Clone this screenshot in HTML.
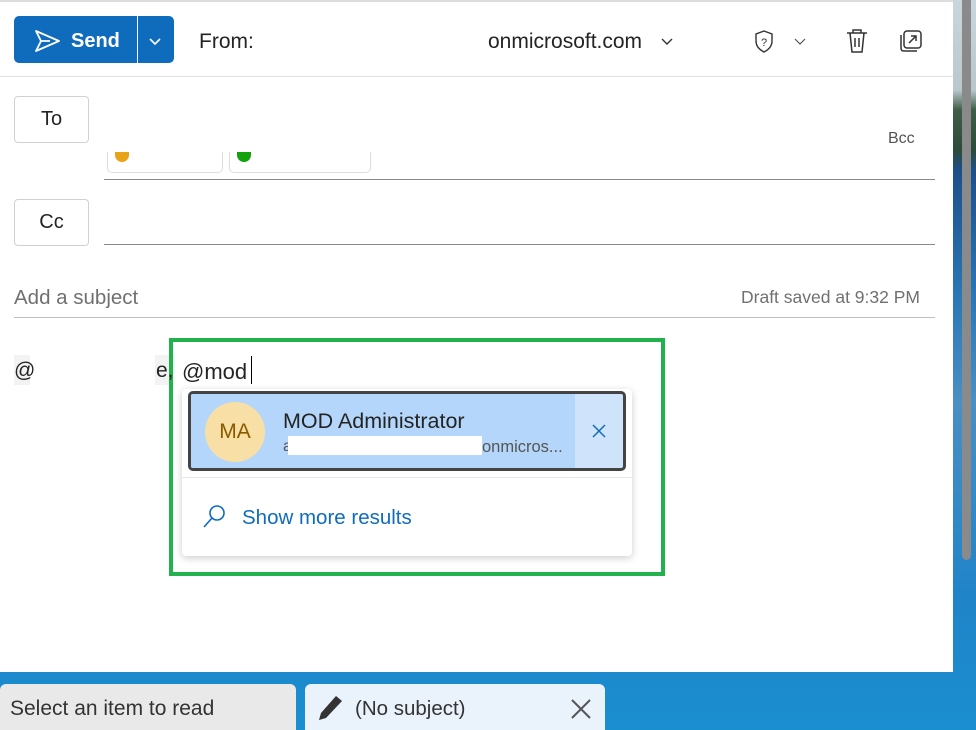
<!DOCTYPE html>
<html><head><meta charset="utf-8"><style>
*{box-sizing:border-box;margin:0;padding:0}
body{width:976px;height:730px;overflow:hidden;position:relative;font-family:"Liberation Sans",sans-serif;
background:linear-gradient(180deg,#c9d6dc 0,#b9c8cc 90px,#3e5e48 110px,#2c4b3a 150px,#1d4f8a 170px,#2a78b8 300px,#4a8ec4 400px,#1f84c8 600px,#1a8fd0 730px)}
.panel{position:absolute;left:0;top:0;width:953px;height:672px;background:#fff;border-top:2px solid #ddd}
.abs{position:absolute}
.scroll{position:absolute;left:962px;top:0;width:9px;height:560px;background:#8a8a8a;border-radius:0 0 5px 5px}
.btn{position:absolute;border:1px solid #d1d1d1;border-radius:4px;background:#fff;font-size:19px;color:#242424;display:flex;align-items:center;justify-content:center}
.line{position:absolute;height:1px;background:#8a8a8a}
</style></head><body>
<div class="panel">
 <div class="abs" style="left:14px;top:14px;width:160px;height:47px;background:#0f6cbd;border-radius:5px"></div>
 <div class="abs" style="left:137px;top:14px;width:1px;height:47px;background:#fff"></div>
 <svg class="abs" style="left:34px;top:27px" width="28" height="24" viewBox="0 0 28 24"><path d="M2 2 L25 12 L2 22 L7 12 Z M7 12 H16" fill="none" stroke="#fff" stroke-width="1.8" stroke-linejoin="round"/></svg>
 <div class="abs" style="left:71px;top:28px;color:#fff;font-size:20px;font-weight:700">Send</div>
 <svg class="abs" style="left:148px;top:35px" width="14" height="10" viewBox="0 0 14 10"><path d="M2 2 L7 7 L12 2" fill="none" stroke="#fff" stroke-width="1.6"/></svg>
 <div class="abs" style="left:199px;top:28px;font-size:21px;color:#242424">From:</div>
 <div class="abs" style="left:488px;top:28px;font-size:21px;color:#242424">onmicrosoft.com</div>
 <svg class="abs" style="left:660px;top:35px" width="14" height="10"><path d="M2 2 L7 7 L12 2" fill="none" stroke="#333" stroke-width="1.4"/></svg>
 <svg class="abs" style="left:752px;top:27px" width="24" height="26" viewBox="0 0 24 26"><path d="M12 2 L20 5 V12 C20 18 16 21 12 23 C8 21 4 18 4 12 V5 Z" fill="none" stroke="#333" stroke-width="1.4"/><text x="12" y="17" font-size="11" text-anchor="middle" font-family="Liberation Sans" fill="#333">?</text></svg>
 <svg class="abs" style="left:794px;top:36px" width="12" height="8"><path d="M1 1 L6 6 L11 1" fill="none" stroke="#555" stroke-width="1.2"/></svg>
 <svg class="abs" style="left:845px;top:25px" width="24" height="28" viewBox="0 0 24 28"><path d="M2 6 H22 M8 6 V3 H16 V6 M5 6 L7 25 H17 L19 6 M10 11 V20 M14 11 V20" fill="none" stroke="#333" stroke-width="1.5"/></svg>
 <svg class="abs" style="left:898px;top:27px" width="26" height="24" viewBox="0 0 26 24"><rect x="6" y="2" width="17" height="17" rx="3" fill="none" stroke="#333" stroke-width="1.5"/><path d="M3 6 V19 Q3 22 6 22 H19" fill="none" stroke="#333" stroke-width="1.5"/><path d="M11 14 L18 7 M13 7 H18 V12" fill="none" stroke="#333" stroke-width="1.5"/></svg>
 <div class="abs" style="left:0;top:74px;width:953px;height:1px;background:#e0e0e0"></div>
 <div class="btn" style="left:14px;top:94px;width:75px;height:47px;font-size:20px">To</div>
 <div class="abs" style="left:888px;top:128px;font-size:16px;color:#555">Bcc</div>
 <div class="abs" style="left:107px;top:150px;width:116px;height:21px;border:1px solid #ddd;border-top:none;border-radius:0 0 5px 5px"></div>
 <div class="abs" style="left:229px;top:150px;width:142px;height:21px;border:1px solid #ddd;border-top:none;border-radius:0 0 5px 5px"></div>
 <div class="abs" style="left:115px;top:150px;width:14px;height:10px;background:#e8a317;border-radius:0 0 7px 7px"></div>
 <div class="abs" style="left:237px;top:150px;width:14px;height:10px;background:#13a10e;border-radius:0 0 7px 7px"></div>
 <div class="line" style="left:104px;top:177px;width:831px"></div>
 <div class="btn" style="left:14px;top:197px;width:75px;height:47px;font-size:20px">Cc</div>
 <div class="line" style="left:104px;top:242px;width:831px"></div>
 <div class="abs" style="left:14px;top:284px;font-size:20.5px;color:#707070">Add a subject</div>
 <div class="abs" style="left:741px;top:285px;font-size:17.5px;color:#707070">Draft saved at 9:32 PM</div>
 <div class="abs" style="left:14px;top:315px;width:921px;height:1px;background:#c0c0c0"></div>
 <div class="abs" style="left:14px;top:353px;width:16px;height:30px;background:#f3f3f3"></div>
 <div class="abs" style="left:155px;top:353px;width:20px;height:30px;background:#f3f3f3"></div>
 <div class="abs" style="left:169px;top:336px;width:496px;height:238px;border:4px solid #22b14c"></div>
 <div class="abs" style="left:14px;top:357px;font-size:21px;color:#242424">@</div>
 <div class="abs" style="left:156px;top:357px;font-size:21px;color:#242424">e,</div>
 <div class="abs" style="left:182px;top:357px;font-size:22px;color:#242424">@mod</div>
 <div class="abs" style="left:251px;top:354px;width:1px;height:28px;background:#000"></div>
 <div class="abs" style="left:182px;top:387px;width:450px;height:167px;background:#fff;border-radius:4px;box-shadow:0 2px 8px rgba(0,0,0,.2)"></div>
 <div class="abs" style="left:188px;top:389px;width:438px;height:80px;border:3px solid #444;border-radius:5px;background:#cfe3fb;overflow:hidden">
  <div class="abs" style="left:0;top:0;width:384px;height:74px;background:#b4d6fa"></div>
  <div class="abs" style="left:14px;top:8px;width:60px;height:60px;border-radius:50%;background:#f8dfa6;color:#8a5a00;font-size:21px;display:flex;align-items:center;justify-content:center">MA</div>
  <div class="abs" style="left:92px;top:15px;font-size:21.5px;color:#242424">MOD Administrator</div>
  <div class="abs" style="left:92px;top:44px;font-size:16px;color:#555">a</div>
  <div class="abs" style="left:97px;top:42px;width:194px;height:19px;background:#fff"></div>
  <div class="abs" style="left:291px;top:44px;font-size:16.5px;color:#555">onmicros...</div>
  <svg class="abs" style="left:400px;top:29px" width="16" height="16"><path d="M2 2 L14 14 M14 2 L2 14" stroke="#0f6cbd" stroke-width="1.5"/></svg>
 </div>
 <div class="abs" style="left:182px;top:475px;width:450px;height:1px;background:#e6e6e6"></div>
 <svg class="abs" style="left:202px;top:501px" width="26" height="26" viewBox="0 0 26 26"><circle cx="15" cy="10" r="7" fill="none" stroke="#0f6cbd" stroke-width="1.6"/><path d="M10 15 L2 24" stroke="#0f6cbd" stroke-width="1.6"/></svg>
 <div class="abs" style="left:242px;top:504px;font-size:20.5px;color:#0f6cbd">Show more results</div>
</div>
<div class="scroll"></div>
<div class="abs" style="left:0;top:684px;width:296px;height:46px;background:#e9e9e9;border-radius:6px 6px 0 0"></div>
<div class="abs" style="left:10px;top:697px;font-size:21px;color:#333">Select an item to read</div>
<div class="abs" style="left:305px;top:684px;width:300px;height:46px;background:#eaf2fc;border-radius:6px 6px 0 0"></div>
<svg class="abs" style="left:316px;top:694px" width="28" height="28" viewBox="0 0 28 28"><path d="M20 2 L26 7 L10 24 L3 26 L5 19 Z" fill="#333"/></svg>
<div class="abs" style="left:355px;top:697px;font-size:20.5px;color:#333">(No subject)</div>
<svg class="abs" style="left:570px;top:698px" width="22" height="22"><path d="M2 2 L20 20 M20 2 L2 20" stroke="#555" stroke-width="2"/></svg>
</body></html>
